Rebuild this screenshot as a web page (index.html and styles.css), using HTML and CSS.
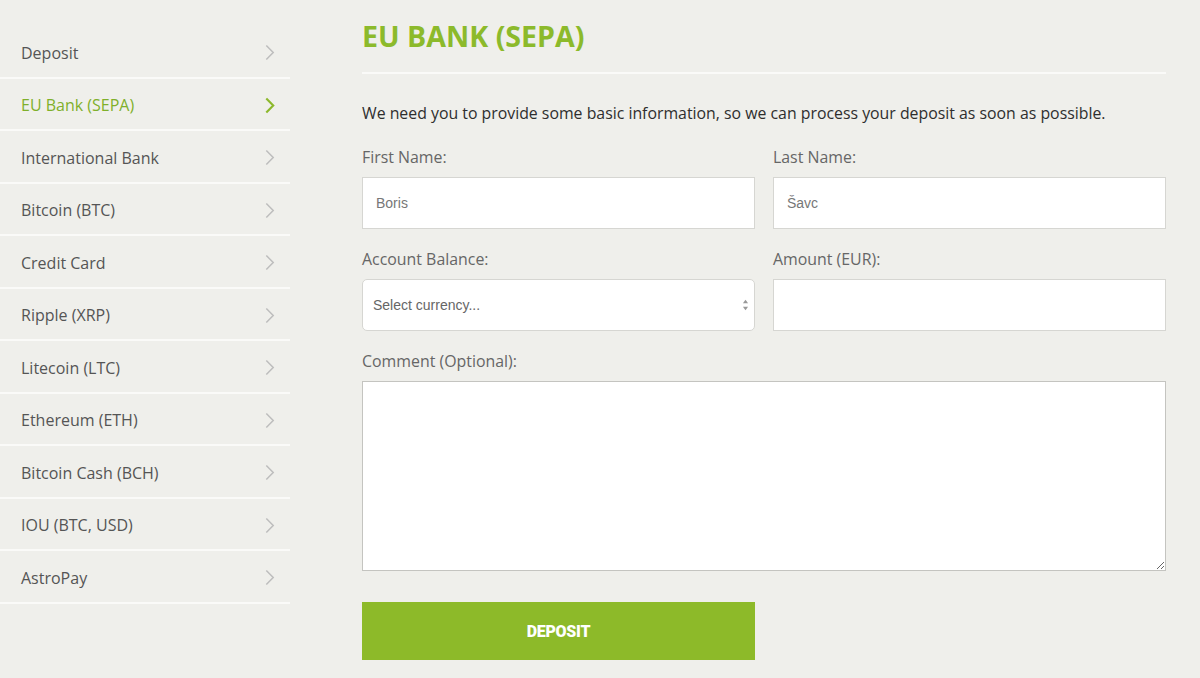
FILE: index.html
```html
<!DOCTYPE html>
<html lang="en">
<head>
<meta charset="utf-8">
<title>EU Bank (SEPA)</title>
<link rel="stylesheet" href="styles.css">
</head>
<body>
<div class="page">
  <nav class="sidebar">
    <a class="nav-item">Deposit<svg class="chev" viewBox="0 0 10 16"><polyline points="2,1.5 8.5,8 2,14.5"/></svg></a>
    <a class="nav-item active">EU Bank (SEPA)<svg class="chev" viewBox="0 0 10 16"><polyline points="2,1.5 8.5,8 2,14.5"/></svg></a>
    <a class="nav-item">International Bank<svg class="chev" viewBox="0 0 10 16"><polyline points="2,1.5 8.5,8 2,14.5"/></svg></a>
    <a class="nav-item">Bitcoin (BTC)<svg class="chev" viewBox="0 0 10 16"><polyline points="2,1.5 8.5,8 2,14.5"/></svg></a>
    <a class="nav-item">Credit Card<svg class="chev" viewBox="0 0 10 16"><polyline points="2,1.5 8.5,8 2,14.5"/></svg></a>
    <a class="nav-item">Ripple (XRP)<svg class="chev" viewBox="0 0 10 16"><polyline points="2,1.5 8.5,8 2,14.5"/></svg></a>
    <a class="nav-item">Litecoin (LTC)<svg class="chev" viewBox="0 0 10 16"><polyline points="2,1.5 8.5,8 2,14.5"/></svg></a>
    <a class="nav-item">Ethereum (ETH)<svg class="chev" viewBox="0 0 10 16"><polyline points="2,1.5 8.5,8 2,14.5"/></svg></a>
    <a class="nav-item">Bitcoin Cash (BCH)<svg class="chev" viewBox="0 0 10 16"><polyline points="2,1.5 8.5,8 2,14.5"/></svg></a>
    <a class="nav-item">IOU (BTC, USD)<svg class="chev" viewBox="0 0 10 16"><polyline points="2,1.5 8.5,8 2,14.5"/></svg></a>
    <a class="nav-item">AstroPay<svg class="chev" viewBox="0 0 10 16"><polyline points="2,1.5 8.5,8 2,14.5"/></svg></a>
  </nav>
  <main class="main">
    <h1 class="title">EU BANK (SEPA)</h1>
    <p class="intro">We need you to provide some basic information, so we can process your deposit as soon as possible.</p>
    <form class="form">
      <div class="field">
        <label class="label">First Name:</label>
        <input class="input" type="text" value="Boris">
      </div>
      <div class="field">
        <label class="label">Last Name:</label>
        <input class="input" type="text" value="Šavc">
      </div>
      <div class="field">
        <label class="label">Account Balance:</label>
        <div class="select-wrap">
          <select class="select"><option>Select currency...</option></select>
          <svg class="arrows" viewBox="0 0 8 14"><polygon points="4,1 7,5 1,5"/><polygon points="1,9 7,9 4,13"/></svg>
        </div>
      </div>
      <div class="field">
        <label class="label">Amount (EUR):</label>
        <input class="input" type="text" value="">
      </div>
      <div class="field wide">
        <label class="label">Comment (Optional):</label>
        <textarea class="textarea"></textarea>
      </div>
      <div class="actions">
        <button class="btn" type="button">DEPOSIT</button>
      </div>
    </form>
  </main>
</div>
</body>
</html>
```

FILE: styles.css
```css
* { box-sizing: border-box; }
html, body { margin: 0; padding: 0; }
body {
  background: #efefeb;
  font-family: "Open Sans", "Liberation Sans", sans-serif;
  color: #333;
  height: 678px;
  overflow: hidden;
}
.page {
  display: flex;
  align-items: flex-start;
}
.sidebar {
  width: 290px;
  padding-top: 26px;
  display: flex;
  flex-direction: column;
}
.nav-item {
  display: flex;
  align-items: center;
  justify-content: space-between;
  height: 52.5px;
  padding: 3px 15px 0 21px;
  font-size: 16px;
  color: #555;
  border-bottom: 2px solid #fafaf8;
  text-decoration: none;
}
.nav-item.active { color: #7fb02a; }
.chev {
  width: 11px;
  height: 17px;
  fill: none;
  stroke: #bdbdbd;
  stroke-width: 1.4;
}
.nav-item.active .chev { stroke: #8cb82b; stroke-width: 2; }

.main {
  margin-left: 72px;
  width: 804px;
  padding-top: 18px;
}
.title {
  margin: 0;
  font-size: 28.6px;
  line-height: 36px;
  font-weight: 700;
  color: #8cba2b;
  padding-bottom: 18px;
  border-bottom: 2px solid #fafaf8;
}
.intro {
  margin: 27px 0 21px;
  font-size: 15.85px;
  line-height: 24px;
  color: #2e2e2e;
}
.form {
  display: grid;
  grid-template-columns: 1fr 1fr;
  column-gap: 18px;
}
.field {
  display: flex;
  flex-direction: column;
  margin-bottom: 19px;
}
.field.wide { grid-column: 1 / 3; margin-bottom: 31px; }
.label {
  font-size: 15.9px;
  line-height: 22px;
  color: #666;
  margin-bottom: 9px;
}
.input, .select, .textarea {
  width: 100%;
  background: #fff;
  border: 1px solid #d6d6d2;
  font-family: "Liberation Sans", Arial, sans-serif;
  font-size: 14px;
  color: #777;
  outline: none;
}
.input {
  height: 52px;
  padding: 0 13px;
  border-radius: 0;
}
.select-wrap { position: relative; }
.select {
  -webkit-appearance: none;
  appearance: none;
  height: 52px;
  padding: 0 10px;
  border-radius: 5px;
  color: #666;
}
.arrows {
  position: absolute;
  right: 6px;
  top: 20px;
  width: 7px;
  height: 12px;
  fill: #999;
}
.textarea {
  height: 190px;
  border-color: #c4c4c0;
  resize: vertical;
  display: block;
}
.actions { grid-column: 1 / 2; }
.btn {
  width: 100%;
  height: 58px;
  background: #8dba29;
  border: none;
  color: #fff;
  font-family: Roboto, "Liberation Sans", sans-serif;
  font-weight: 900;
  font-size: 16px;
  letter-spacing: -0.3px;
}
```
